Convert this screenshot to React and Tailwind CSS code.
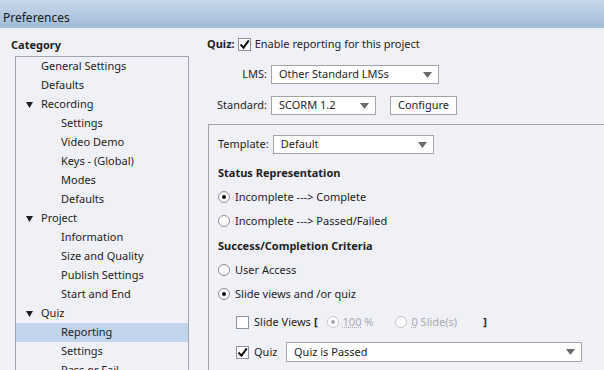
import React from "react";

const tree = [
  { label: "General Settings", level: 1 },
  { label: "Defaults", level: 1 },
  { label: "Recording", level: 0 },
  { label: "Settings", level: 2 },
  { label: "Video Demo", level: 2 },
  { label: "Keys - (Global)", level: 2 },
  { label: "Modes", level: 2 },
  { label: "Defaults", level: 2 },
  { label: "Project", level: 0 },
  { label: "Information", level: 2 },
  { label: "Size and Quality", level: 2 },
  { label: "Publish Settings", level: 2 },
  { label: "Start and End", level: 2 },
  { label: "Quiz", level: 0 },
  { label: "Reporting", level: 2, selected: true },
  { label: "Settings", level: 2 },
  { label: "Pass or Fail", level: 2 },
];

const Arrow = () => (
  <svg width="9" height="6" viewBox="0 0 9 6" className="shrink-0">
    <path d="M0 0h9L4.5 6z" fill="#6b6b6b" />
  </svg>
);

const Select = ({ value, className }) => (
  <div
    className={`flex h-[19px] items-center justify-between border border-[#a3a3a8] bg-white pl-[7px] pr-[6px] ${className}`}
  >
    <span>{value}</span>
    <Arrow />
  </div>
);

const Check = ({ checked }) => (
  <span className="flex h-[13px] w-[13px] shrink-0 items-center justify-center border border-[#8e8f9f] bg-white">
    {checked && (
      <svg width="11" height="11" viewBox="0 0 11 11">
        <path d="M1.5 5.5l3 3.2L9.8 1.3" fill="none" stroke="#111" strokeWidth="2" />
      </svg>
    )}
  </span>
);

const Radio = ({ checked, disabled }) => (
  <span
    className={`flex h-[12px] w-[12px] shrink-0 items-center justify-center rounded-full border bg-white ${
      disabled ? "border-[#c4c4cc]" : "border-[#8e8f9f]"
    }`}
  >
    {checked && (
      <span className={`h-[4px] w-[4px] rounded-full ${disabled ? "bg-[#a8a8b0]" : "bg-[#111]"}`} />
    )}
  </span>
);

const RadioRow = ({ checked, label, className = "" }) => (
  <div className={`flex h-[18px] items-center gap-[5px] ${className}`}>
    <Radio checked={checked} />
    <span>{label}</span>
  </div>
);

export default function App() {
  return (
    <div
      className="h-[370px] w-[604px] overflow-hidden bg-[#f0f0f7] text-[11px] text-[#1e1e1e]"
      style={{ fontFamily: '"Noto Sans", sans-serif' }}
    >
      <div className="flex h-[28px] items-center bg-gradient-to-b from-[#c8d8ea] to-[#a1bbd7] pl-[3px] pt-[8px] text-[12px] text-[#1a1a1a]">
        Preferences
      </div>

      <div className="flex">
        {/* category tree */}
        <div className="w-[208px] shrink-0">
          <div className="mt-[9px] flex h-[17px] items-center pl-[11px] font-bold">Category</div>
          <div className="ml-[15px] mt-[2px] h-[320px] w-[174px] border border-[#a3a3b0]">
            {tree.map((item, i) => (
              <div
                key={i}
                className={`flex h-[19px] items-center ${item.selected ? "bg-[#c1d4ec]" : ""}`}
              >
                {item.level === 0 && (
                  <div className="flex w-[25px] justify-center pl-[1px]">
                    <svg width="7" height="6" viewBox="0 0 7 6">
                      <path d="M0 0h7L3.5 6z" fill="#1e1e1e" />
                    </svg>
                  </div>
                )}
                <span className={item.level === 0 ? "" : item.level === 1 ? "pl-[25px]" : "pl-[45px]"}>
                  {item.label}
                </span>
              </div>
            ))}
          </div>
        </div>

        {/* reporting settings */}
        <div className="flex-1">
          <div className="-ml-[1px] mt-[7px] flex h-[18px] items-center gap-[3px]">
            <span className="font-bold">Quiz:</span>
            <Check checked />
            <span className="ml-[1px]">Enable reporting for this project</span>
          </div>

          <div className="mt-[12px] flex h-[19px] items-center gap-[4px]">
            <span className="w-[59px] text-right">LMS:</span>
            <Select value="Other Standard LMSs" className="w-[168px]" />
          </div>

          <div className="mt-[12px] flex h-[19px] items-center gap-[4px]">
            <span className="w-[59px] text-right">Standard:</span>
            <Select value="SCORM 1.2" className="w-[105px]" />
            <button className="ml-[10px] h-[19px] w-[67px] border border-[#a3a3a8] bg-white">Configure</button>
          </div>

          <div className="mt-[9px] h-[260px] border-l border-t border-[#a3a3a8] pl-[9px]">
            <div className="mt-[10px] flex h-[19px] items-center gap-[4px]">
              <span>Template:</span>
              <Select value="Default" className="w-[161px]" />
            </div>

            <div className="mt-[10px] flex h-[18px] items-center font-bold">Status Representation</div>
            <RadioRow checked label="Incomplete ---> Complete" className="mt-[6px]" />
            <RadioRow label="Incomplete ---> Passed/Failed" className="mt-[6px]" />

            <div className="mt-[7px] flex h-[18px] items-center font-bold">Success/Completion Criteria</div>
            <RadioRow label="User Access" className="mt-[6px]" />
            <RadioRow checked label="Slide views and /or quiz" className="mt-[6px]" />

            <div className="ml-[18px] mt-[10px] flex h-[18px] items-center">
              <Check />
              <span className="ml-[5px]">Slide Views</span>
              <span className="ml-[3px] font-bold">[</span>
              <span className="ml-[9px] flex items-center gap-[4px] text-[#a8a8b0]">
                <Radio checked disabled />
                <span>
                  <span className="underline decoration-dotted">100</span> %
                </span>
              </span>
              <span className="ml-[22px] flex items-center gap-[4px] text-[#a8a8b0]">
                <Radio disabled />
                <span>
                  <span className="underline decoration-dotted">0</span> Slide(s)
                </span>
              </span>
              <span className="ml-[26px] font-bold">]</span>
            </div>

            <div className="ml-[18px] mt-[11px] flex h-[20px] items-center">
              <Check checked />
              <span className="ml-[5px] w-[32px]">Quiz</span>
              <Select value="Quiz is Passed" className="h-[20px] w-[296px]" />
            </div>
          </div>
        </div>
      </div>
    </div>
  );
}
